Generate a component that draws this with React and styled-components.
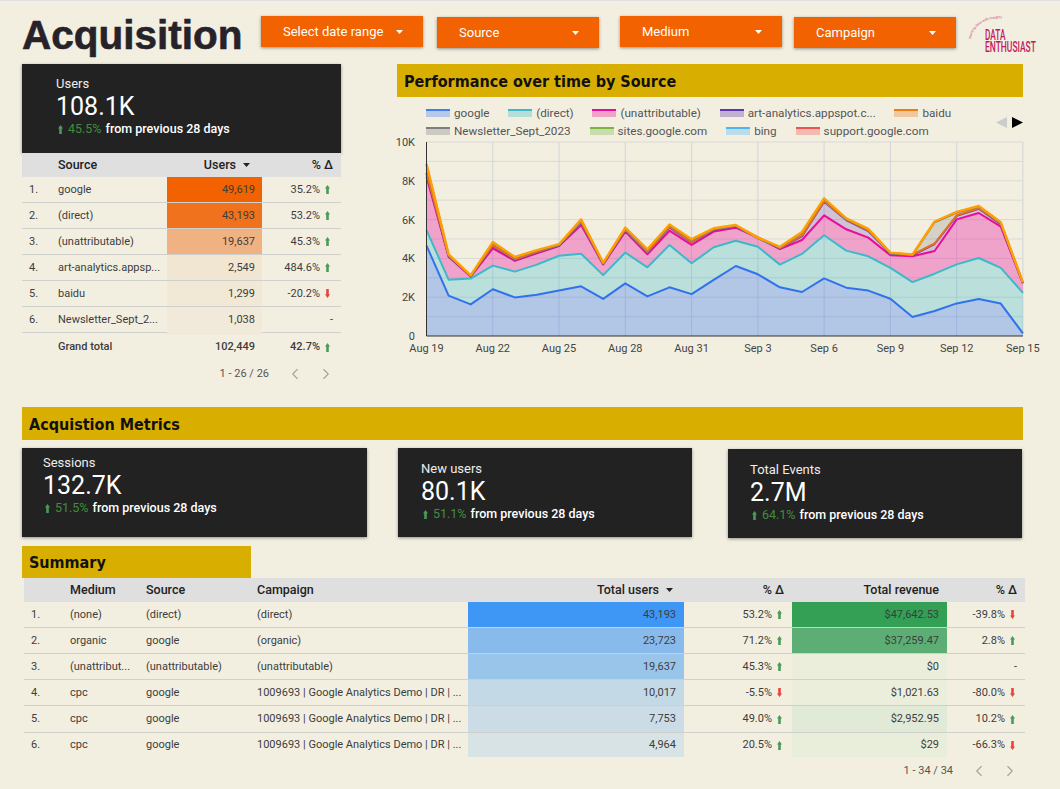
import React from 'react';
import styled, { createGlobalStyle } from 'styled-components';
import { ChevronLeft, ChevronRight } from 'lucide-react';

const GlobalStyle = createGlobalStyle`
  html, body {
    margin: 0;
    padding: 0;
    background: #f2efe1;
  }
  * {
    box-sizing: border-box;
  }
`;

const Page = styled.div`
  width: 1060px;
  height: 789px;
  overflow: hidden;
  padding-left: 22px;
  background: #f2efe1;
  border-top: 1px solid #dfe1e2;
  font-family: Roboto, "Liberation Sans", sans-serif;
  color: #3d3d3d;
`;

const TopRow = styled.div`
  display: flex;
  height: 63px;
`;

const Title = styled.h1`
  width: 239px;
  margin: 11px 0 0;
  font-family: "Liberation Sans", Arial, sans-serif;
  font-size: 40.5px;
  line-height: 46px;
  font-weight: 700;
  color: #27222a;
  -webkit-text-stroke: 0.6px #27222a;
`;

const FilterButton = styled.div`
  display: flex;
  align-items: center;
  justify-content: space-between;
  width: 162px;
  height: 31px;
  margin-top: ${p => p.$top}px;
  margin-left: ${p => p.$left}px;
  padding: 0 20px 0 22px;
  background: #f26200;
  color: #fff;
  font-size: 13px;
  box-shadow: 0 1px 3px rgba(0, 0, 0, 0.4);
`;

const Logo = styled.svg`
  flex: none;
  width: 76px;
  height: 46px;
  margin: 11px 0 0 11px;
  font-family: Roboto, sans-serif;
  fill: #c2185b;
`;

const Upper = styled.div`
  display: flex;
  height: 343px;
`;

const LeftCol = styled.div`
  width: 319px;
`;

const RightCol = styled.div`
  width: 626px;
  margin-left: 56px;
`;

const GoldBar = styled.h2`
  display: flex;
  align-items: center;
  width: ${p => p.$width}px;
  height: ${p => p.$height}px;
  margin: ${p => p.$margin || 0};
  padding: ${p => p.$drop || 1}px 0 0 7px;
  background: #d8ae00;
  color: #111;
  font-family: "DejaVu Sans", sans-serif;
  font-stretch: condensed;
  font-size: 16px;
  font-weight: 700;
`;

const ScoreCard = styled.div`
  width: ${p => p.$width}px;
  height: 89px;
  margin: ${p => p.$margin || 0};
  padding: ${p => p.$pad};
  background: #222;
  color: #fff;
  box-shadow: 0 1px 3px rgba(0, 0, 0, 0.4);
`;

const ScoreLabel = styled.div`
  font-size: 13px;
  line-height: 16px;
  color: #eee;
`;

const ScoreValue = styled.div`
  margin-top: 1px;
  font-size: 25px;
  line-height: 28px;
`;

const ScoreDelta = styled.div`
  display: flex;
  align-items: center;
  gap: 5px;
  padding-left: 2px;
  font-size: 12.5px;
  line-height: 16px;
  font-weight: 500;

  b {
    margin-right: -1px;
    font-weight: 400;
    color: #3f8f3a;
  }
`;

const Table = styled.div`
  width: ${p => p.$width}px;
  margin-left: ${p => p.$indent || 0}px;
`;

const Row = styled.div`
  display: grid;
  grid-template-columns: ${p => p.$cols};
  height: ${p => p.$height || 26}px;
  font-size: 11px;
  line-height: 14px;
  border-bottom: ${p => (p.$line ? '1px solid #cfcfcc' : 'none')};
`;

const HeaderRow = styled(Row)`
  height: 24px;
  background: #dfdfdf;
  color: #222;
  font-size: 12.5px;
  font-weight: 500;
`;

const Cell = styled.div`
  display: flex;
  align-items: center;
  justify-content: ${p => (p.$right ? 'flex-end' : 'flex-start')};
  gap: 5px;
  min-width: 0;
  padding: ${p => p.$pad || '0'};
  background: ${p => p.$fill || 'transparent'};
  font-weight: ${p => (p.$bold ? 500 : 'inherit')};
  white-space: nowrap;
  box-shadow: ${p => (p.$overhang ? `0 3px 0 ${p.$fill}` : 'none')};
`;

const SortCaret = styled.svg`
  margin-left: 2px;
`;

const Pager = styled.div`
  display: flex;
  align-items: center;
  justify-content: flex-end;
  height: ${p => p.$height}px;
  padding-right: 6px;
  font-size: 11px;
  color: #555;

  span {
    margin-right: 17px;
  }

  svg + svg {
    margin-left: 13px;
  }
`;

const Legend = styled.div`
  display: flex;
  align-items: center;
  height: 43px;
  padding: 7px 0 0 29px;
`;

const LegendRows = styled.div`
  flex: 1;
`;

const LegendRow = styled.div`
  display: flex;
  height: 18px;
  gap: ${p => p.$gap}px;
`;

const LegendItem = styled.div`
  display: flex;
  align-items: center;
  gap: 4px;
  font-size: 11.7px;
  color: #555;
`;

const Swatch = styled.i`
  width: 24px;
  height: 8px;
  border-top: 2px solid ${p => p.$color};
  background: ${p => p.$color}55;
`;

const ChartSvg = styled.svg`
  display: block;
  overflow: visible;
  font-family: Roboto, sans-serif;
  font-size: 11px;
  fill: #444;
`;

const CardRow = styled.div`
  display: flex;
  height: 90px;
  margin-top: 8px;
`;

const legendRows = [
  [
    ['google', '#3f7ff0'],
    ['(direct)', '#3cb9c9'],
    ['(unattributable)', '#ec0a9a'],
    ['art-analytics.appspot.c...', '#5e35b1'],
    ['baidu', '#ef7c14'],
  ],
  [
    ['Newsletter_Sept_2023', '#7d7d7d'],
    ['sites.google.com', '#7cb342'],
    ['bing', '#4db6f5'],
    ['support.google.com', '#ef5350'],
  ],
];

// stacked totals per day, in thousands
const google = [4.66, 2.08, 1.63, 2.41, 1.99, 2.13, 2.35, 2.56, 1.91, 2.71, 2.04, 2.51, 2.16, 2.89, 3.61, 3.18, 2.51, 2.27, 2.97, 2.49, 2.34, 1.92, 0.98, 1.29, 1.68, 1.91, 1.67, 0.14];
const direct = [5.46, 2.9, 2.96, 3.63, 3.32, 3.68, 4.14, 4.24, 3.14, 4.3, 3.54, 4.69, 3.75, 4.57, 4.91, 4.6, 3.68, 4.23, 5.19, 4.4, 4.11, 3.51, 2.78, 3.21, 3.69, 4.02, 3.51, 2.22];
const unattributable = [8.21, 4.09, 3.06, 4.52, 3.87, 4.26, 4.64, 5.72, 3.69, 5.38, 4.21, 5.43, 4.69, 5.38, 5.58, 5.07, 4.48, 4.95, 6.22, 5.5, 5.07, 4.16, 4.11, 4.38, 6.01, 6.34, 5.64, 2.71];
const artAnalytics = [8.38, 4.12, 3.08, 4.64, 3.93, 4.31, 4.66, 5.84, 3.71, 5.46, 4.3, 5.6, 4.81, 5.46, 5.65, 5.07, 4.5, 5.15, 6.92, 5.98, 5.41, 4.26, 4.16, 4.74, 6.19, 6.56, 5.77, 2.73];
const total = [8.87, 4.21, 3.13, 4.84, 4.07, 4.43, 4.73, 6.01, 3.78, 5.59, 4.47, 5.74, 4.99, 5.55, 5.72, 5.07, 4.6, 5.36, 7.1, 6.06, 5.52, 4.3, 4.2, 5.9, 6.4, 6.7, 5.86, 2.77];

const series = [
  { values: google, color: '#3072ee', alpha: 0.33 },
  { values: direct, color: '#3cb9c9', alpha: 0.3 },
  { values: unattributable, color: '#ec0a9a', alpha: 0.33 },
  { values: artAnalytics, color: '#6a3fb5', alpha: 0.25 },
  { values: artAnalytics.map(v => v + 0.03), color: '#e8701a', alpha: 0.25 },
  { values: total.map(v => v - 0.04), color: '#7d7d7d', alpha: 0.25 },
  { values: total, color: '#ffa000', alpha: 0.3 },
];

const X0 = 29.5;
const STEP = 22.09;
const BOTTOM = 196;
const PER_K = 19.4;

const px = i => +(X0 + i * STEP).toFixed(1);
const py = v => +(BOTTOM - v * PER_K).toFixed(1);

const xTicks = ['Aug 19', 'Aug 22', 'Aug 25', 'Aug 28', 'Aug 31', 'Sep 3', 'Sep 6', 'Sep 9', 'Sep 12', 'Sep 15'];

function Chart() {
  const lines = series.map(s => s.values.map((v, i) => `${px(i)},${py(v)}`).join(' '));
  return (
    <ChartSvg width="626" height="215">
      {[1, 2, 3, 4, 5, 6, 7, 8, 9, 10].map(k => (
        <line key={k} x1={X0} x2="626" y1={py(k)} y2={py(k)} stroke="#d9d9d6" />
      ))}
      {xTicks.map((t, i) => i > 0 && (
        <line key={t} x1={px(i * 3)} x2={px(i * 3)} y1={py(10)} y2={BOTTOM} stroke="#d2d4da" />
      ))}
      {series.map((s, n) => {
        const lower = n === 0
          ? `${px(27)},${BOTTOM} ${X0},${BOTTOM}`
          : lines[n - 1].split(' ').reverse().join(' ');
        return <polygon key={n} points={`${lines[n]} ${lower}`} fill={s.color} fillOpacity={s.alpha} stroke="none" />;
      })}
      {series.map((s, n) => (
        <polyline key={n} points={lines[n]} fill="none" stroke={s.color} strokeWidth={n === 6 ? 2.4 : 2} strokeLinejoin="round" />
      ))}
      <line x1={X0} x2={X0} y1={py(10)} y2={BOTTOM} stroke="#333" />
      <line x1={X0} x2="626" y1={BOTTOM} y2={BOTTOM} stroke="#333" />
      {[0, 2, 4, 6, 8, 10].map(k => (
        <text key={k} x="18" y={py(k) + 4} textAnchor="end">{k === 0 ? '0' : `${k}K`}</text>
      ))}
      {xTicks.map((t, i) => (
        <text key={t} x={px(i * 3)} y="212" textAnchor="middle">{t}</text>
      ))}
    </ChartSvg>
  );
}

const Caret = ({ color = '#222' }) => (
  <SortCaret width="7" height="4" viewBox="0 0 7 4"><path d="M0 0h7L3.5 4z" fill={color} /></SortCaret>
);

const Trend = ({ down }) => (
  <svg width="5" height="9" viewBox="0 0 5 9" style={{ flex: 'none' }}>
    <path
      d={down ? 'M1.2 0h2.600v5.500H5L2.500 9 0 5.500h1.200z' : 'M2.500 0 5 3.500H3.800V9H1.200V3.500H0z'}
      fill={down ? '#e8453c' : '#4a9a58'}
    />
  </svg>
);

const Delta = ({ value }) => {
  if (value === '-') return <span>-</span>;
  return (
    <>
      <span>{value}</span>
      <Trend down={value.startsWith('-')} />
    </>
  );
};

const sourceCols = '36px 109px 95px 79px';
const sourceRows = [
  ['1.', 'google', '49,619', '#f26200', '35.2%'],
  ['2.', '(direct)', '43,193', '#f0721d', '53.2%'],
  ['3.', '(unattributable)', '19,637', '#f0b282', '45.3%'],
  ['4.', 'art-analytics.appsp...', '2,549', '#f0e6d2', '484.6%'],
  ['5.', 'baidu', '1,299', '#f1e8d6', '-20.2%'],
  ['6.', 'Newsletter_Sept_2...', '1,038', '#f1e9d9', '-'],
];

const summaryCols = '46px 76px 111px 211px 216px 108px 155px 78px';
const campaign = '1009693 | Google Analytics Demo | DR | ...';
const summaryRows = [
  ['1.', '(none)', '(direct)', '(direct)', '43,193', '#3f97f5', '53.2%', '$47,642.53', '#33a055', '-39.8%'],
  ['2.', 'organic', 'google', '(organic)', '23,723', '#88bbec', '71.2%', '$37,259.47', '#5cae74', '2.8%'],
  ['3.', '(unattribut...', '(unattributable)', '(unattributable)', '19,637', '#99c5ea', '45.3%', '$0', '#ebeeda', '-'],
  ['4.', 'cpc', 'google', campaign, '10,017', '#c3d9e6', '-5.5%', '$1,021.63', '#ebeeda', '-80.0%'],
  ['5.', 'cpc', 'google', campaign, '7,753', '#cbdce6', '49.0%', '$2,952.95', '#e1e9d7', '10.2%'],
  ['6.', 'cpc', 'google', campaign, '4,964', '#d8e3e5', '20.5%', '$29', '#e9eeda', '-66.3%'],
];

const summaryRowHeight = { '5.': 27, '6.': 24 };

const Score = ({ label, value, change, ...rest }) => (
  <ScoreCard {...rest}>
    <ScoreLabel>{label}</ScoreLabel>
    <ScoreValue>{value}</ScoreValue>
    <ScoreDelta>
      <Trend />
      <b>{change}</b>
      <span>from previous 28 days</span>
    </ScoreDelta>
  </ScoreCard>
);

const PageControls = ({ text, height }) => (
  <Pager $height={height}>
    <span>{text}</span>
    <ChevronLeft size={18} color="#a3a3a0" strokeWidth={1.5} />
    <ChevronRight size={18} color="#a3a3a0" strokeWidth={1.5} />
  </Pager>
);

export default function App() {
  return (
    <Page>
      <GlobalStyle />
      <TopRow>
        <Title>Acquisition</Title>
        <FilterButton $top={15} $left={0}>Select date range <Caret color="#fff" /></FilterButton>
        <FilterButton $top={16} $left={14}>Source <Caret color="#fff" /></FilterButton>
        <FilterButton $top={15} $left={21}>Medium <Caret color="#fff" /></FilterButton>
        <FilterButton $top={16} $left={12}>Campaign <Caret color="#fff" /></FilterButton>
        <Logo viewBox="0 0 76 46">
          <path id="logoArc" d="M4 27 C6 12 22 4 40 7" fill="none" />
          <text fontSize="3.5" opacity="0.8">
            <textPath href="#logoArc">learning data with insights</textPath>
          </text>
          <text transform="translate(18 28) scale(0.55 1)" fontSize="15" fontWeight="500">DATA</text>
          <text transform="translate(18 40) scale(0.565 1)" fontSize="15" fontWeight="500">ENTHUSIAST</text>
        </Logo>
      </TopRow>

      <Upper>
        <LeftCol>
          <Score $width={319} $pad="12px 34px" label="Users" value="108.1K" change="45.5%" />
          <Table $width={319}>
            <HeaderRow $cols={sourceCols}>
              <Cell />
              <Cell>Source</Cell>
              <Cell $right $pad="0 12px 0 0">Users <Caret /></Cell>
              <Cell $right $pad="0 8px 0 0">% Δ</Cell>
            </HeaderRow>
            {sourceRows.map(r => (
              <Row key={r[0]} $cols={sourceCols} $line>
                <Cell $pad="0 0 0 7px">{r[0]}</Cell>
                <Cell>{r[1]}</Cell>
                <Cell $right $pad="0 7px 0 0" $fill={r[3]} $overhang={r[0] === '6.'}>{r[2]}</Cell>
                <Cell $right $pad={r[4] === '-' ? '0 8px 0 0' : '0 11px 0 0'}><Delta value={r[4]} /></Cell>
              </Row>
            ))}
            <Row $cols={sourceCols} $height={28}>
              <Cell />
              <Cell $bold>Grand total</Cell>
              <Cell $right $bold $pad="0 7px 0 0">102,449</Cell>
              <Cell $right $bold $pad="0 11px 0 0"><Delta value="42.7%" /></Cell>
            </Row>
            <PageControls text="1 - 26 / 26" height={25} />
          </Table>
        </LeftCol>

        <RightCol>
          <GoldBar $width={626} $height={33} $drop={2}>Performance over time by Source</GoldBar>
          <Legend>
            <LegendRows>
              {legendRows.map((items, n) => (
                <LegendRow key={n} $gap={n === 0 ? 18.7 : 19}>
                  {items.map(([name, color]) => (
                    <LegendItem key={name}><Swatch $color={color} />{name}</LegendItem>
                  ))}
                </LegendRow>
              ))}
            </LegendRows>
            <svg width="27" height="11" viewBox="0 0 27 11">
              <path d="M11 0v11L0 5.500z" fill="#ccc" />
              <path d="M16 0v11l11-5.500z" fill="#000" />
            </svg>
          </Legend>
          <Chart />
        </RightCol>
      </Upper>

      <GoldBar $width={1001} $height={33}>Acquistion Metrics</GoldBar>
      <CardRow>
        <Score $width={345} $pad="7px 21px" label="Sessions" value="132.7K" change="51.5%" />
        <Score $width={294} $margin="0 0 0 31px" $pad="13px 23px" label="New users" value="80.1K" change="51.1%" />
        <Score $width={294} $margin="1px 0 0 36px" $pad="13px 22px" label="Total Events" value="2.7M" change="64.1%" />
      </CardRow>

      <GoldBar $width={229} $height={32} $margin="8px 0 0">Summary</GoldBar>
      <Table $width={1001} $indent={2}>
        <HeaderRow $cols={summaryCols}>
          <Cell />
          <Cell>Medium</Cell>
          <Cell>Source</Cell>
          <Cell>Campaign</Cell>
          <Cell $right $pad="0 11px 0 0">Total users <Caret /></Cell>
          <Cell $right $pad="0 8px 0 0">% Δ</Cell>
          <Cell $right $pad="0 8px 0 0">Total revenue</Cell>
          <Cell $right $pad="0 8px 0 0">% Δ</Cell>
        </HeaderRow>
        {summaryRows.map(r => (
          <Row key={r[0]} $cols={summaryCols} $line={r[0] !== '6.'} $height={summaryRowHeight[r[0]]}>
            <Cell $pad="0 0 0 7px">{r[0]}</Cell>
            <Cell>{r[1]}</Cell>
            <Cell>{r[2]}</Cell>
            <Cell>{r[3]}</Cell>
            <Cell $right $pad="0 8px 0 0" $fill={r[5]}>{r[4]}</Cell>
            <Cell $right $pad="0 10px 0 0"><Delta value={r[6]} /></Cell>
            <Cell $right $pad="0 8px 0 0" $fill={r[8]}>{r[7]}</Cell>
            <Cell $right $pad={r[9] === '-' ? '0 8px 0 0' : '0 10px 0 0'}><Delta value={r[9]} /></Cell>
          </Row>
        ))}
        <PageControls text="1 - 34 / 34" height={27} />
      </Table>
    </Page>
  );
}
